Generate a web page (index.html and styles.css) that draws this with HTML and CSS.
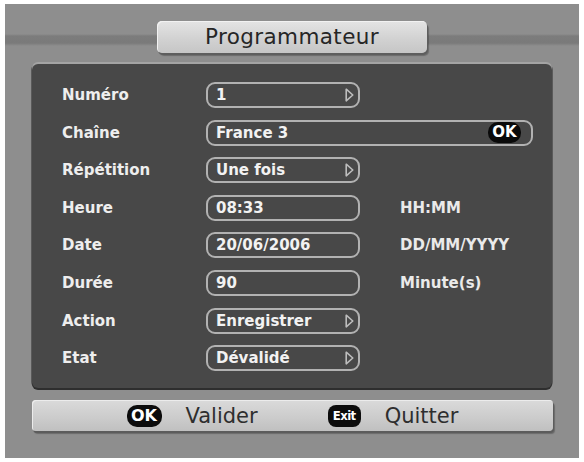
FILE: index.html
```html
<!DOCTYPE html>
<html lang="fr">
<head>
<meta charset="utf-8">
<title>Programmateur</title>
<link rel="stylesheet" href="styles.css">
</head>
<body>
<div class="screen">
  <div class="title-row">
    <div class="title-btn">Programmateur</div>
  </div>
  <div class="panel">
    <div class="row">
      <span class="label">Numéro</span>
      <span class="field short"><span>1</span><svg class="arrow" width="9" height="14" viewBox="0 0 9 14"><path d="M1.2 1.2 L7.8 7 L1.2 12.8 Z" fill="none" stroke="#bdbdbd" stroke-width="1.6" stroke-linejoin="round"/></svg></span>
    </div>
    <div class="row">
      <span class="label">Chaîne</span>
      <span class="field long"><span>France 3</span><span class="ok-badge">OK</span></span>
    </div>
    <div class="row">
      <span class="label">Répétition</span>
      <span class="field short"><span>Une fois</span><svg class="arrow" width="9" height="14" viewBox="0 0 9 14"><path d="M1.2 1.2 L7.8 7 L1.2 12.8 Z" fill="none" stroke="#bdbdbd" stroke-width="1.6" stroke-linejoin="round"/></svg></span>
    </div>
    <div class="row">
      <span class="label">Heure</span>
      <span class="field short"><span>08:33</span></span>
      <span class="hint">HH:MM</span>
    </div>
    <div class="row">
      <span class="label">Date</span>
      <span class="field short"><span>20/06/2006</span></span>
      <span class="hint">DD/MM/YYYY</span>
    </div>
    <div class="row">
      <span class="label">Durée</span>
      <span class="field short"><span>90</span></span>
      <span class="hint">Minute(s)</span>
    </div>
    <div class="row">
      <span class="label">Action</span>
      <span class="field short"><span>Enregistrer</span><svg class="arrow" width="9" height="14" viewBox="0 0 9 14"><path d="M1.2 1.2 L7.8 7 L1.2 12.8 Z" fill="none" stroke="#bdbdbd" stroke-width="1.6" stroke-linejoin="round"/></svg></span>
    </div>
    <div class="row">
      <span class="label">Etat</span>
      <span class="field short"><span>Dévalidé</span><svg class="arrow" width="9" height="14" viewBox="0 0 9 14"><path d="M1.2 1.2 L7.8 7 L1.2 12.8 Z" fill="none" stroke="#bdbdbd" stroke-width="1.6" stroke-linejoin="round"/></svg></span>
    </div>
  </div>
  <div class="bottom-bar">
    <div class="action"><span class="key ok">OK</span><span class="action-text">Valider</span></div>
    <div class="action"><span class="key exit">Exit</span><span class="action-text">Quitter</span></div>
  </div>
</div>
</body>
</html>
```
FILE: styles.css
```css
html, body {
  margin: 0;
  padding: 0;
  background: #ffffff;
}
body {
  width: 584px;
  height: 462px;
  overflow: hidden;
  font-family: "DejaVu Sans", "Liberation Sans", sans-serif;
}
.screen {
  margin: 4px 5px 0 5px;
  width: 574px;
  height: 454px;
  box-sizing: border-box;
  background:
    linear-gradient(to bottom,
      transparent 0, transparent 30px,
      #7c7c7c 32px, #7a7a7a 39px,
      transparent 42px, transparent 100%),
    #8e8e8e;
  padding-top: 17px;
  display: flex;
  flex-direction: column;
  align-items: center;
}
.title-row {
  display: flex;
  justify-content: center;
  width: 100%;
}
.title-btn {
  width: 270px;
  height: 32px;
  box-sizing: border-box;
  border-radius: 5px;
  background: linear-gradient(to bottom, #e4e4e4 0%, #d2d2d2 55%, #c6c6c6 100%);
  box-shadow: inset 1px 1px 0 #f2f2f2, 1px 2px 0 #5e5e5e, 2px 3px 1px rgba(0,0,0,0.25);
  color: #262626;
  font-size: 21.5px;
  line-height: 32px;
  text-align: center;
  letter-spacing: 0.4px;
}
.panel {
  margin-top: 11px;
  width: 520px;
  height: 324px;
  box-sizing: border-box;
  background: #484848;
  border-radius: 6px;
  box-shadow: 0 -2px 0 #a4a4a4, 0 2px 0 #2e2e2e, -1px 0 0 #5a5a5a, 1px 0 0 #5a5a5a;
  padding: 18px 0 0 30px;
  display: flex;
  flex-direction: column;
  gap: 11.6px;
}
.row {
  display: flex;
  align-items: center;
  height: 26px;
}
.label {
  width: 144px;
  color: #eeeeee;
  font-weight: bold;
  font-size: 15px;
}
.field {
  height: 26px;
  box-sizing: border-box;
  border: 2px solid #b2b2b2;
  border-radius: 9px;
  display: flex;
  align-items: center;
  justify-content: space-between;
  padding: 0 4px 0 8px;
  color: #f2f2f2;
  font-weight: bold;
  font-size: 15px;
}
.field.short {
  width: 154px;
}
.field.long {
  width: 327px;
  padding-right: 10px;
}
.arrow {
  display: block;
}
.ok-badge {
  background: #0a0a0a;
  color: #ffffff;
  font-size: 15px;
  font-weight: bold;
  height: 21px;
  line-height: 21px;
  width: 33px;
  text-align: center;
  border-radius: 10px;
}
.hint {
  margin-left: 40px;
  color: #eaeaea;
  font-weight: bold;
  font-size: 15px;
}
.bottom-bar {
  margin-top: 12px;
  width: 521px;
  height: 31px;
  box-sizing: border-box;
  border-radius: 4px;
  background: linear-gradient(to bottom, #dadada 0%, #cbcbcb 60%, #c0c0c0 100%);
  box-shadow: inset 1px 1px 0 #ececec, 1px 2px 0 #5c5c5c, 2px 3px 1px rgba(0,0,0,0.25);
  display: flex;
  align-items: center;
  padding-left: 95px;
  gap: 70px;
}
.action {
  display: flex;
  align-items: center;
  gap: 24px;
}
.action-text {
  color: #2e2e2e;
  font-size: 21px;
  line-height: 30px;
}
.key {
  background: #0c0c0c;
  color: #ffffff;
  height: 22px;
  line-height: 22px;
  width: 35px;
  text-align: center;
  border-radius: 10px;
  font-weight: bold;
}
.key.ok {
  font-size: 16px;
}
.key.exit {
  width: 33px;
  font-family: "DejaVu Sans Condensed", "DejaVu Sans", sans-serif;
  font-stretch: condensed;
  font-size: 13px;
  letter-spacing: -0.6px;
  border-radius: 8px;
}
```
